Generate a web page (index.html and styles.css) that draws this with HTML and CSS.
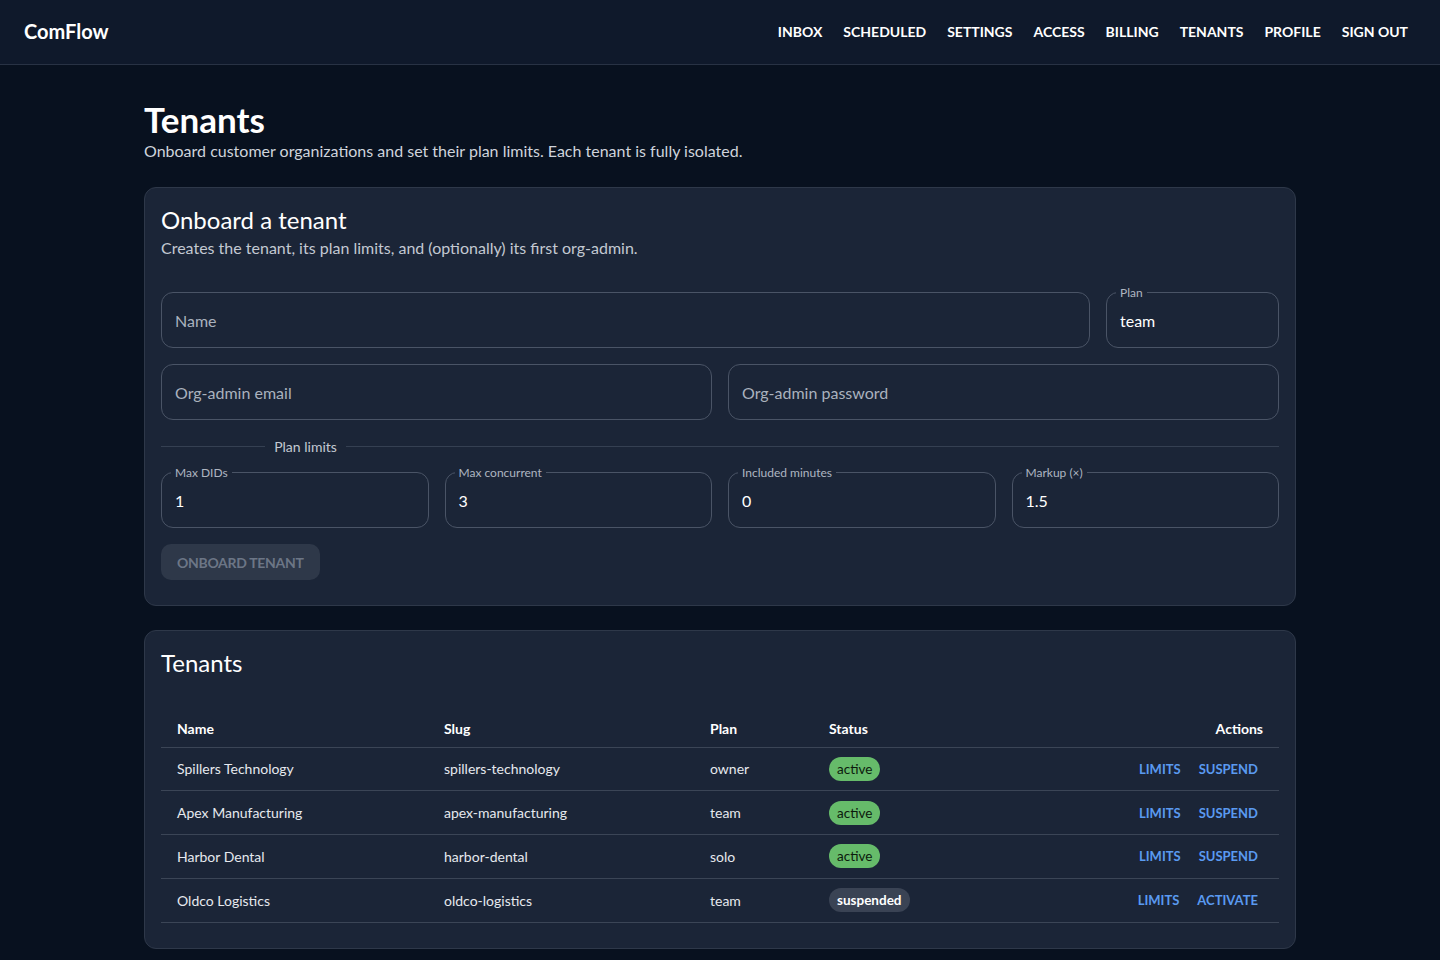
FILE: index.html
```html
<!DOCTYPE html>
<html lang="en">
<head>
    <meta charset="UTF-8">
    <meta name="viewport" content="width=device-width, initial-scale=1.0">
    <title>Tenants - ComFlow</title>
    <link rel="stylesheet" href="styles.css">
</head>
<body>
    <header class="topbar">
        <div class="brand">ComFlow</div>
        <nav class="nav">
            <a href="#">Inbox</a>
            <a href="#">Scheduled</a>
            <a href="#">Settings</a>
            <a href="#">Access</a>
            <a href="#">Billing</a>
            <a href="#">Tenants</a>
            <a href="#">Profile</a>
            <a href="#">Sign out</a>
        </nav>
    </header>

    <main class="page">
        <h1>Tenants</h1>
        <p class="lead">Onboard customer organizations and set their plan limits. Each tenant is fully isolated.</p>

        <section class="card">
            <h2>Onboard a tenant</h2>
            <p class="card-sub">Creates the tenant, its plan limits, and (optionally) its first org-admin.</p>

            <div class="form">
                <div class="row row-name">
                    <div class="field"><span class="placeholder">Name</span></div>
                    <div class="field"><label>Plan</label><span class="value">team</span></div>
                </div>
                <div class="row row-two">
                    <div class="field"><span class="placeholder">Org-admin email</span></div>
                    <div class="field"><span class="placeholder">Org-admin password</span></div>
                </div>

                <div class="divider"><span>Plan limits</span></div>

                <div class="row row-four">
                    <div class="field"><label>Max DIDs</label><span class="value">1</span></div>
                    <div class="field"><label>Max concurrent</label><span class="value">3</span></div>
                    <div class="field"><label>Included minutes</label><span class="value">0</span></div>
                    <div class="field"><label>Markup (×)</label><span class="value">1.5</span></div>
                </div>
            </div>

            <button class="btn-primary" disabled>Onboard tenant</button>
        </section>

        <section class="card">
            <h2>Tenants</h2>
            <table class="tenants">
                <thead>
                    <tr>
                        <th class="col-name">Name</th>
                        <th class="col-slug">Slug</th>
                        <th class="col-plan">Plan</th>
                        <th>Status</th>
                        <th class="col-actions">Actions</th>
                    </tr>
                </thead>
                <tbody>
                    <tr>
                        <td>Spillers Technology</td>
                        <td>spillers-technology</td>
                        <td>owner</td>
                        <td><span class="chip chip-active">active</span></td>
                        <td class="col-actions"><a href="#" class="act">Limits</a><a href="#" class="act">Suspend</a></td>
                    </tr>
                    <tr>
                        <td>Apex Manufacturing</td>
                        <td>apex-manufacturing</td>
                        <td>team</td>
                        <td><span class="chip chip-active">active</span></td>
                        <td class="col-actions"><a href="#" class="act">Limits</a><a href="#" class="act">Suspend</a></td>
                    </tr>
                    <tr>
                        <td>Harbor Dental</td>
                        <td>harbor-dental</td>
                        <td>solo</td>
                        <td><span class="chip chip-active">active</span></td>
                        <td class="col-actions"><a href="#" class="act">Limits</a><a href="#" class="act">Suspend</a></td>
                    </tr>
                    <tr>
                        <td>Oldco Logistics</td>
                        <td>oldco-logistics</td>
                        <td>team</td>
                        <td><span class="chip chip-off">suspended</span></td>
                        <td class="col-actions"><a href="#" class="act">Limits</a><a href="#" class="act">Activate</a></td>
                    </tr>
                </tbody>
            </table>
        </section>
    </main>
</body>
</html>
```

FILE: styles.css
```css
* {
    box-sizing: border-box;
}
body {
    margin: 0;
    font-family: Lato, "Open Sans", sans-serif;
    background-color: #08111f;
    color: #e8ebf0;
}
.topbar {
    height: 65px;
    display: flex;
    align-items: center;
    justify-content: space-between;
    padding: 0 24px 2px;
    background: #0f192b;
    border-bottom: 1px solid #283244;
}
.brand {
    font-size: 20px;
    font-weight: 700;
    color: #fff;
}
.nav {
    display: flex;
    gap: 5px;
}
.nav a {
    color: #fff;
    text-decoration: none;
    text-transform: uppercase;
    font-size: 14px;
    font-weight: 700;
    padding: 6px 8px;
}
.page {
    width: 1152px;
    margin: 0 auto;
    padding: 34px 0 40px;
}
h1 {
    margin: 0;
    font-size: 35px;
    line-height: 40px;
    font-weight: 700;
    color: #fff;
}
.lead {
    margin: 0 0 24px;
    font-size: 16px;
    line-height: 24px;
    color: #cfd4dc;
}
.card {
    background: #1b2537;
    border: 1px solid #2e3849;
    border-radius: 12px;
    padding: 16px 16px 25px;
    margin-bottom: 24px;
}
h2 {
    margin: 0;
    font-size: 24px;
    line-height: 32px;
    font-weight: 400;
    color: #fff;
}
.card-sub {
    margin: 0;
    font-size: 16px;
    line-height: 24px;
    color: #c3c9d2;
}
.form {
    margin-top: 32px;
    display: flex;
    flex-direction: column;
    gap: 16px;
}
.row {
    display: grid;
    gap: 16px;
}
.row-name {
    grid-template-columns: 1fr 173px;
}
.row-two {
    grid-template-columns: 1fr 1fr;
}
.row-four {
    grid-template-columns: repeat(4, 1fr);
}
.field {
    position: relative;
    height: 56px;
    border: 1px solid #4a5466;
    border-radius: 12px;
    display: flex;
    align-items: center;
    padding: 0 13px;
    font-size: 16px;
}
.field label {
    position: absolute;
    top: -8px;
    left: 9px;
    padding: 0 4px;
    background: #1b2537;
    font-size: 12px;
    line-height: 15px;
    color: #aeb5c1;
}
.placeholder {
    color: #aab2be;
}
.value {
    color: #fff;
}
.divider {
    display: flex;
    align-items: center;
    height: 20px;
    font-size: 14px;
    color: #c3c9d2;
}
.divider::before,
.divider::after {
    content: "";
    height: 1px;
    background: #354052;
}
.divider::before {
    flex: 0 1 10%;
}
.divider::after {
    flex: 0 1 90%;
}
.divider span {
    padding: 0 9.6px;
    white-space: nowrap;
}
.btn-primary {
    margin-top: 16px;
    height: 36px;
    padding: 0 16px;
    border: none;
    border-radius: 10px;
    background: #2e3849;
    color: #6c7686;
    font-family: inherit;
    font-size: 14px;
    letter-spacing: -0.3px;
    font-weight: 700;
    text-transform: uppercase;
}
.tenants {
    width: 100%;
    margin-top: 24px;
    border-collapse: collapse;
    font-size: 14px;
}
.tenants th,
.tenants td {
    text-align: left;
    padding: 0 16px;
    border-bottom: 1px solid #3b4556;
}
.tenants th {
    height: 44px;
    padding-bottom: 8px;
    line-height: 20px;
    vertical-align: bottom;
    font-weight: 700;
    color: #fff;
}
.tenants td {
    height: 43.75px;
    color: #e6e9ee;
}
.col-name {
    width: 267px;
}
.col-slug {
    width: 266px;
}
.col-plan {
    width: 119px;
}
.tenants .col-actions {
    text-align: right;
}
.chip {
    display: inline-block;
    height: 24px;
    line-height: 24px;
    padding: 0 8px;
    border-radius: 12px;
    font-size: 13.5px;
}
.chip-active {
    background: #66bb6a;
    color: #0c1a0d;
}
.chip-off {
    background: #3a4354;
    color: #fff;
    font-weight: 700;
}
.act {
    display: inline-block;
    padding: 4px 5px;
    margin-left: 8px;
    color: #5a9af0;
    text-decoration: none;
    text-transform: uppercase;
    font-size: 13px;
    font-weight: 700;
}
```
